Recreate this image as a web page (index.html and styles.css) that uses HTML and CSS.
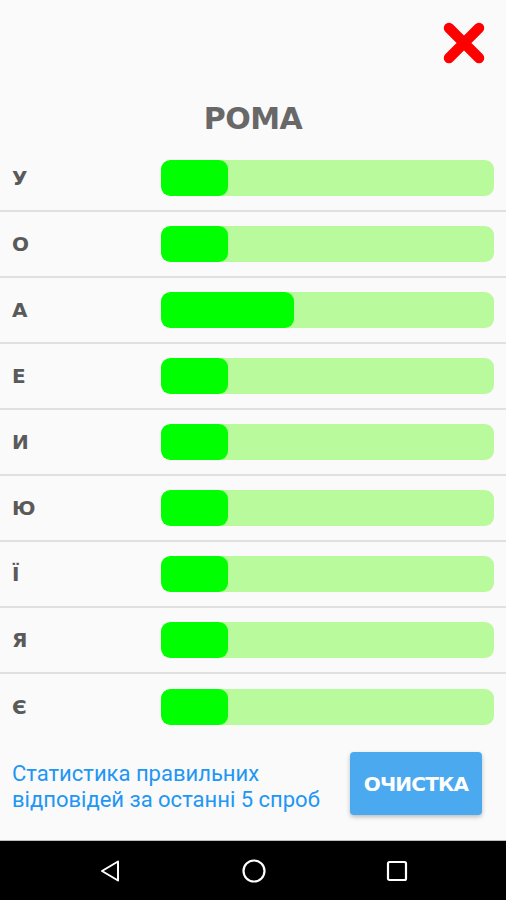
FILE: index.html
```html
<!DOCTYPE html>
<html>
<head>
<meta charset="utf-8">
<link rel="stylesheet" href="styles.css">
</head>
<body>
<div class="screen">
  <div class="top">
    <button class="close" aria-label="close">
      <svg width="44" height="44" viewBox="0 0 44 44"><path d="M7 7 L37 37 M37 7 L7 37" stroke="#ff0000" stroke-width="10.5" stroke-linecap="round"/></svg>
    </button>
  </div>
  <h1 class="title">РОМА</h1>
  <div class="rows">
    <div class="row"><span class="letter">У</span><div class="track"><div class="fill" style="width:20%"></div></div></div>
    <div class="row"><span class="letter">О</span><div class="track"><div class="fill" style="width:20%"></div></div></div>
    <div class="row"><span class="letter">А</span><div class="track"><div class="fill" style="width:40%"></div></div></div>
    <div class="row"><span class="letter">Е</span><div class="track"><div class="fill" style="width:20%"></div></div></div>
    <div class="row"><span class="letter">И</span><div class="track"><div class="fill" style="width:20%"></div></div></div>
    <div class="row"><span class="letter">Ю</span><div class="track"><div class="fill" style="width:20%"></div></div></div>
    <div class="row"><span class="letter">Ї</span><div class="track"><div class="fill" style="width:20%"></div></div></div>
    <div class="row"><span class="letter">Я</span><div class="track"><div class="fill" style="width:20%"></div></div></div>
    <div class="row last"><span class="letter">Є</span><div class="track"><div class="fill" style="width:20%"></div></div></div>
  </div>
  <div class="footer">
    <p class="note">Статистика правильних<br>відповідей за останні 5 спроб</p>
    <button class="clear">ОЧИСТКА</button>
  </div>
</div>
<nav class="navbar">
  <svg width="24" height="24" viewBox="0 0 24 24"><path d="M20 2.5 L4 12 L20 21.5 Z" fill="none" stroke="#fff" stroke-width="2" stroke-linejoin="round"/></svg>
  <svg width="26" height="26" viewBox="0 0 26 26"><circle cx="13" cy="13" r="10.5" fill="none" stroke="#fff" stroke-width="2.2"/></svg>
  <svg width="22" height="22" viewBox="0 0 22 22"><rect x="2" y="2" width="18" height="18" rx="1.5" fill="none" stroke="#fff" stroke-width="2.2"/></svg>
</nav>
</body>
</html>
```
FILE: styles.css
```css
* { box-sizing: border-box; }
html, body { margin: 0; padding: 0; }
body {
  width: 506px;
  height: 900px;
  background: #fafafa;
  font-family: "DejaVu Sans", "Noto Sans", sans-serif;
  display: flex;
  flex-direction: column;
  overflow: hidden;
}
.screen {
  height: 841px;
  display: flex;
  flex-direction: column;
  border-bottom: 1px solid #bdbdbd;
}
.top {
  display: flex;
  justify-content: flex-end;
  padding: 21px 20px 0 0;
  height: 66px;
}
.close {
  background: none;
  border: 0;
  padding: 0;
  width: 44px;
  height: 44px;
}
.close svg { display: block; }
.title {
  margin: 35px 0 0 0;
  text-align: center;
  font-family: "DejaVu Sans", sans-serif;
  font-weight: bold;
  font-size: 30px;
  line-height: 36px;
  color: #686868;
  letter-spacing: -0.5px;
  height: 45px;
}
.rows { display: flex; flex-direction: column; }
.row {
  height: 66px;
  display: flex;
  align-items: center;
  padding: 0 12px 0 12px;
  border-bottom: 2px solid #e0e0e0;
}
.row.last { border-bottom: 0; }
.letter {
  width: 149px;
  font-size: 20px;
  font-weight: bold;
  color: #5a5a5a;
  font-family: "DejaVu Sans", sans-serif;
}
.track {
  width: 333px;
  height: 36px;
  border-radius: 9px;
  background: #b9fb9c;
  overflow: hidden;
  display: flex;
}
.fill {
  height: 100%;
  background: #00ff00;
  border-radius: 9px;
}
.footer {
  display: flex;
  align-items: center;
  justify-content: space-between;
  padding: 12px 24px 0 12px;
}
.note {
  margin: 7px 0 0 0;
  font-family: Roboto, "Noto Sans", sans-serif;
  font-size: 22px;
  line-height: 26px;
  color: #2196f3;
}
.clear {
  width: 132px;
  height: 63px;
  border: 0;
  border-radius: 4px;
  background: #4aa9ef;
  color: #fff;
  font-family: "DejaVu Sans", sans-serif;
  font-weight: bold;
  font-size: 20px;
  letter-spacing: -0.8px;
  box-shadow: 0 2px 4px rgba(0,0,0,0.25);
  padding: 0;
}
.navbar {
  flex: 1;
  background: #000;
  display: flex;
  align-items: center;
  justify-content: space-between;
  padding: 0 98px 0 98px;
}
.navbar svg { display: block; }
```
